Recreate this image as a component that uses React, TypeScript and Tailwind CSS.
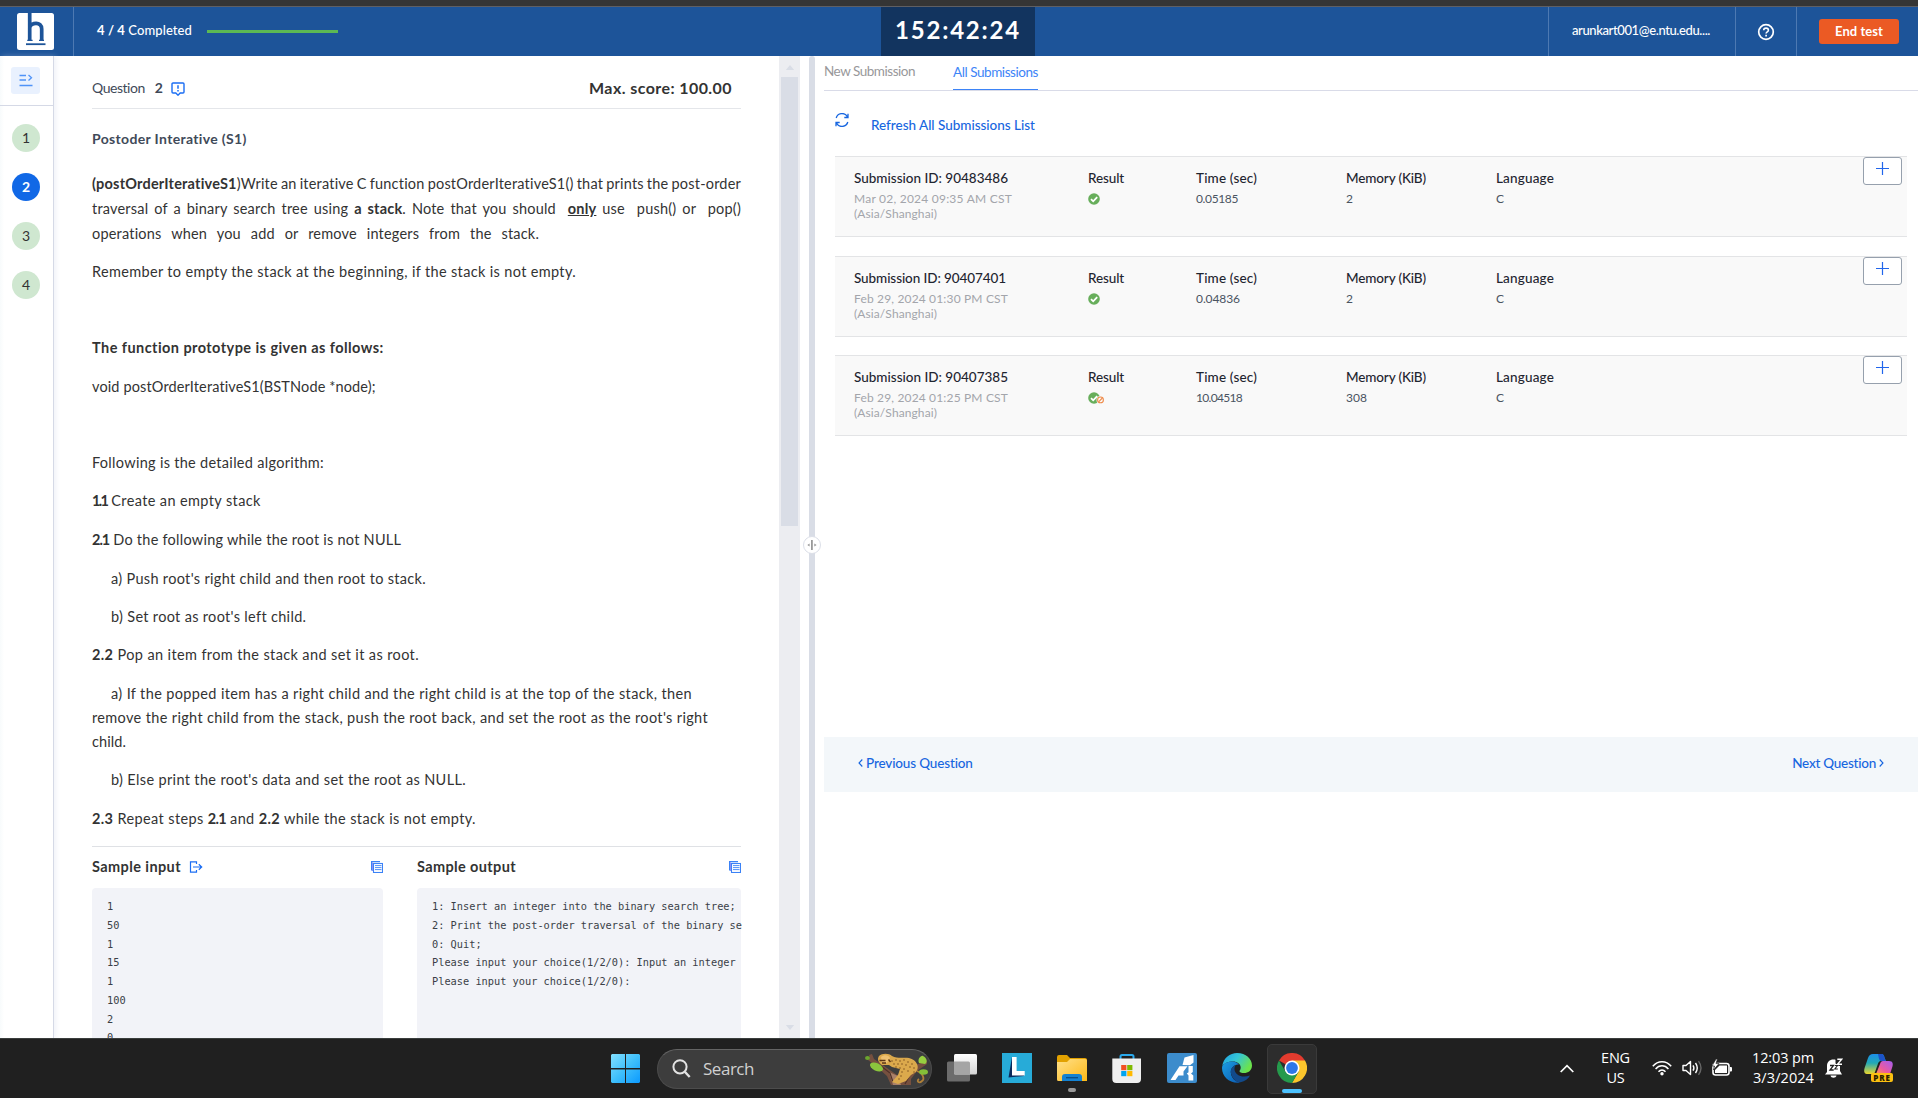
import { useLayoutEffect, useRef, type ReactNode } from "react";

type FitProps = {
  w: number;
  by?: "letter" | "word";
  className?: string;
  children: ReactNode;
};

/** One line of text whose tracking (or word gaps) is adjusted to fill a given measure. */
function Fit({ w, by = "letter", className = "", children }: FitProps) {
  const ref = useRef<HTMLSpanElement>(null);
  useLayoutEffect(() => {
    const el = ref.current;
    if (!el) return;
    el.style.letterSpacing = by === "word" ? "0.2px" : "0px";
    el.style.wordSpacing = "0px";
    const free = w - el.getBoundingClientRect().width;
    const text = el.textContent ?? "";
    if (by === "word") {
      el.style.wordSpacing = `${free / Math.max(1, text.split(/[ \u00a0]/).length - 1)}px`;
    } else {
      el.style.letterSpacing = `${free / Math.max(1, text.length)}px`;
    }
  }, [w, by]);
  return (
    <span ref={ref} className={`inline-block whitespace-pre ${className}`}>
      {children}
    </span>
  );
}

/* ---------- header ---------- */

function Logo() {
  return (
    <svg viewBox="0 0 37 37" className="h-[37px] w-[37px]">
      <rect width="37" height="37" rx="2.5" fill="#fff" />
      <path d="M12.700 0V28M12.700 14.500C14 9.200 24.700 8.200 24.700 16V28" fill="none" stroke="#1d5499" strokeWidth="3.700" />
      <path d="M10.300 27.400h5.300M22 27.400h5" fill="none" stroke="#1d5499" strokeWidth="1.200" />
      <path d="M9 31.200h19.500" stroke="#1d5499" strokeWidth="1.800" />
    </svg>
  );
}

function Header() {
  return (
    <header className="flex h-[49px] shrink-0 bg-[#1d5499] text-[13px] font-medium text-white">
      <div className="flex w-[74px] items-center border-r border-[#4d79b2] pl-[17px]">
        <Logo />
      </div>
      <div className="flex w-[807px] items-center pl-[23px]">
        <Fit w={95} className="-mt-[3px] leading-4">
          <b>4 / 4</b> Completed
        </Fit>
        <div className="ml-[15px] h-[3px] w-[131px] bg-[#5cb954]" />
      </div>
      <div className="flex w-[154px] items-center bg-[#12345f] pl-[14px] text-[24px] font-bold">
        <Fit w={126} className="-mt-[3px]">152:42:24</Fit>
      </div>
      <div className="flex-1" />
      <div className="flex w-[187px] items-center border-l border-[#4d79b2] pl-[23px]">
        <Fit w={138} className="-mt-[3px] leading-4">arunkart001@e.ntu.edu....</Fit>
      </div>
      <div className="flex w-[61px] items-center justify-center border-l border-[#4d79b2]">
        <svg viewBox="0 0 18 18" className="h-[18px] w-[18px]" fill="none" stroke="#fff">
          <circle cx="9" cy="9" r="7.300" strokeWidth="1.700" />
          <path d="M6.700 7.300c0-3 4.700-2.900 4.700-.1 0 1.700-2.300 1.700-2.300 3.400" strokeWidth="1.600" />
          <path d="M9.100 11.700v1.700" strokeWidth="1.700" />
        </svg>
      </div>
      <div className="flex w-[122px] items-center border-l border-[#4d79b2] pl-[22px]">
        <button className="flex h-[25px] w-20 items-center justify-center rounded-[3px] bg-[#eb5a24] font-bold">
          <Fit w={48} className="-mt-0.5 leading-4">End test</Fit>
        </button>
      </div>
    </header>
  );
}

/* ---------- question rail ---------- */

function Rail() {
  return (
    <aside className="w-[54px] shrink-0 border-r border-[#d5d9e6] bg-linear-to-r from-[#f8fbfc] to-white to-8% shadow-[2px_0_5px_rgba(210,218,235,0.35)]">
      <div className="flex h-[50px] border-b border-[#d5d9e6] pt-[11px] pl-[11px]">
        <div className="flex h-[27px] w-[29px] items-center justify-center rounded-[3px] bg-[#e9f1fe]">
          <svg viewBox="0 0 14 13" className="h-[13px] w-3.5" fill="none" stroke="#4f93f8" strokeWidth="1.300">
            <path d="M.5 1.500H7M.5 6H7M.5 11.500H13.500M9.500 1L12.500 3.800L9.500 6.600" />
          </svg>
        </div>
      </div>
      <div className="flex flex-col items-center gap-[21px] pt-[18px] pr-px text-sm text-[#333]">
        {[1, 2, 3, 4].map((n) => (
          <div
            key={n}
            className={
              n === 2
                ? "flex h-7 w-7 items-center justify-center rounded-full bg-[#1168e6] pb-px font-bold text-white"
                : "flex h-7 w-7 items-center justify-center rounded-full bg-[#cfe7d0] pb-px"
            }
          >
            {n}
          </div>
        ))}
      </div>
    </aside>
  );
}

/* ---------- question text ---------- */

function CopyIcon() {
  return (
    <svg viewBox="0 0 12 12" className="h-3 w-3" fill="none" stroke="#3b82f6">
      <path d="M.6 9.500V.6H9" strokeWidth="1.200" />
      <path d="M1.500 10V1.500" stroke="#8f8ff5" strokeWidth="1" />
      <rect x="2.500" y="2.500" width="9" height="9" strokeWidth="1.100" />
      <path d="M4 4.600h6.500M4 6.600h6.500M4 8.600h6.500" strokeWidth=".9" />
    </svg>
  );
}

function Line({ children, className = "" }: { children: ReactNode; className?: string }) {
  return <p className={`flex h-6 leading-6 ${className}`}>{children}</p>;
}

function Code({ lines }: { lines: string[] }) {
  return (
    <pre className="font-['DejaVu_Sans_Mono',monospace] text-[10.3px] leading-[18.75px] text-[#3a3f47]">
      {lines.join("\n")}
    </pre>
  );
}

function Question() {
  return (
    <section className="flex w-[649px] shrink-0 flex-col text-[14.500px] text-[#333]">
      <div className="flex h-[53px] items-center justify-between border-b border-[#e4e6ea] pt-2.5">
        <div className="flex items-center pt-px text-sm text-[#3f4a59]">
          <Fit w={53} className="leading-5">Question</Fit>
          <b className="ml-2.5 leading-5">2</b>
          <svg viewBox="0 0 14 14" className="mt-0.5 ml-2 h-3.5 w-3.5" fill="none" stroke="#1b6ef3">
            <path d="M2 1h10a1 1 0 0 1 1 1v8a1 1 0 0 1-1 1H9.200L7 13.200L4.800 11H2a1 1 0 0 1-1-1V2a1 1 0 0 1 1-1Z" strokeWidth="1.400" />
            <path d="M7 3.200v3.600M7 8v1.500" strokeWidth="1.500" />
          </svg>
        </div>
        <div className="mr-[9px] pt-px text-[16px] leading-5 font-bold">
          <Fit w={143}>Max. score: 100.00</Fit>
        </div>
      </div>

      <Line className="mt-[18px] text-sm font-bold text-[#3f4a59]">
        <Fit w={155}>Postoder Interative (S1)</Fit>
      </Line>

      <div className="mt-[20px] flex flex-col items-start leading-[25px]">
        <Fit w={649} by="word">
          <b>(postOrderIterativeS1</b>)Write an iterative C function postOrderIterativeS1() that prints the post-order
        </Fit>
        <Fit w={649} by="word">
          traversal of a binary search tree using <b>a stack</b>. Note that you should{"  "}
          <b className="underline">only</b> use{"  "}push() or{"  "}pop()
        </Fit>
        <Fit w={447} by="word">operations when you add or remove integers from the stack.</Fit>
      </div>

      <Line className="mt-3.5">
        <Fit w={484}>Remember to empty the stack at the beginning, if the stack is not empty.</Fit>
      </Line>
      <Line className="mt-[52px] font-bold">
        <Fit w={292}>The function prototype is given as follows:</Fit>
      </Line>
      <Line className="mt-[15px]">
        <Fit w={284}>void postOrderIterativeS1(BSTNode *node);</Fit>
      </Line>
      <Line className="mt-[52px]">
        <Fit w={232}>Following is the detailed algorithm:</Fit>
      </Line>
      <Line className="mt-3.5">
        <Fit w={170}>
          <b className="tracking-[-1.700px]">1.1</b> Create an empty stack
        </Fit>
      </Line>
      <Line className="mt-[15px]">
        <Fit w={310}>
          <b className="tracking-[-1px]">2.1</b> Do the following while the root is not NULL
        </Fit>
      </Line>
      <Line className="mt-[15px] pl-[19px]">
        <Fit w={315}>a) Push root's right child and then root to stack.</Fit>
      </Line>
      <Line className="mt-3.5 pl-[19px]">
        <Fit w={195}>b) Set root as root's left child.</Fit>
      </Line>
      <Line className="mt-3.5">
        <Fit w={327}>
          <b>2.2</b> Pop an item from the stack and set it as root.
        </Fit>
      </Line>
      <Line className="mt-[15px] pl-[19px]">
        <Fit w={581}>a) If the popped item has a right child and the right child is at the top of the stack, then</Fit>
      </Line>
      <Line>
        <Fit w={616}>remove the right child from the stack, push the root back, and set the root as the root's right</Fit>
      </Line>
      <Line>
        <Fit w={34}>child.</Fit>
      </Line>
      <Line className="mt-3.5 pl-[19px]">
        <Fit w={355}>b) Else print the root's data and set the root as NULL.</Fit>
      </Line>
      <Line className="mt-[15px]">
        <Fit w={385}>
          <b>2.3</b> Repeat steps <b className="tracking-[-0.700px]">2.1</b> and <b>2.2</b> while the stack is not empty.
        </Fit>
      </Line>

      <div className="mt-[15px] flex min-h-0 flex-1 gap-[34px] border-t border-[#dfe1e5]">
        <div className="flex w-[291px] flex-col">
          <div className="flex h-[41px] shrink-0 items-center pb-px font-bold">
            <Fit w={89}>Sample input</Fit>
            <svg viewBox="0 0 14 12" className="ml-2 h-3 w-3.5" fill="none" stroke="#1b6ef3" strokeWidth="1.200">
              <path d="M7.500 3V.8H1.500v10.400h6V9M4 6h8.500M9.800 3.200L12.700 6L9.800 8.800" />
            </svg>
            <div className="ml-auto">
              <CopyIcon />
            </div>
          </div>
          <div className="flex-1 rounded-t bg-[#f2f3f8] px-[15px] pt-[9px]">
            <Code lines={["1", "50", "1", "15", "1", "100", "2", "0"]} />
          </div>
        </div>
        <div className="flex min-w-0 flex-1 flex-col">
          <div className="flex h-[41px] shrink-0 items-center justify-between pb-px font-bold">
            <Fit w={99}>Sample output</Fit>
            <CopyIcon />
          </div>
          <div className="flex-1 rounded-t bg-[#f2f3f8] pt-[9px] pl-[15px]">
            <Code
              lines={[
                "1: Insert an integer into the binary search tree;",
                "2: Print the post-order traversal of the binary se",
                "0: Quit;",
                "Please input your choice(1/2/0): Input an integer",
                "Please input your choice(1/2/0):",
              ]}
            />
          </div>
        </div>
      </div>
    </section>
  );
}

function ScrollBar() {
  return (
    <div className="ml-[38px] flex w-[21px] shrink-0 flex-col items-center bg-[#ecedf1]">
      <svg viewBox="0 0 10 6" className="mt-[9px] h-[5px] w-2.5">
        <path d="M0 6L5 0L10 6Z" fill="#d9dde6" />
      </svg>
      <div className="mt-[7px] h-[449px] w-[17px] bg-[#d9dde6]" />
      <svg viewBox="0 0 10 6" className="mt-auto mb-2 h-[5px] w-2.5">
        <path d="M0 0L5 6L10 0Z" fill="#d9dde6" />
      </svg>
    </div>
  );
}

function Splitter() {
  return (
    <div className="relative ml-[9px] w-1.5 shrink-0 rounded-t-sm bg-[#d9dde6]">
      <div className="absolute top-[480px] -left-1.5 flex h-[18px] w-[18px] items-center justify-center rounded-full border border-[#dcdfe8] bg-white">
        <svg viewBox="0 0 10 10" className="h-2.5 w-2.5" fill="#999">
          <rect x="4" width="1.800" height="10" />
          <path d="M.3 5L2.600 3.600V6.400ZM9.600 5L7.300 3.600V6.400Z" />
        </svg>
      </div>
    </div>
  );
}

/* ---------- submissions ---------- */

type Submission = {
  id: string;
  idW: number;
  date: string;
  dateW: number;
  partial?: boolean;
  time: string;
  timeW: number;
  memory: string;
};

const submissions: Submission[] = [
  { id: "90483486", idW: 154, date: "Mar 02, 2024 09:35 AM CST", dateW: 158, time: "0.05185", timeW: 42, memory: "2" },
  { id: "90407401", idW: 152, date: "Feb 29, 2024 01:30 PM CST", dateW: 154, time: "0.04836", timeW: 44, memory: "2" },
  { id: "90407385", idW: 154, date: "Feb 29, 2024 01:25 PM CST", dateW: 154, partial: true, time: "10.04518", timeW: 46, memory: "308" },
];

function ResultIcon({ partial }: { partial?: boolean }) {
  return (
    <svg viewBox="0 0 17 12" className="mt-[3px] h-3 w-[17px]" fill="none">
      <circle cx="6" cy="6" r="5.800" fill="#67ae5b" />
      <path d="M3 6.100L5.200 8.300L9.200 4.100" stroke="#fff" strokeWidth="1.800" />
      {partial && (
        <>
          <circle cx="12.500" cy="7.900" r="4" fill="#f9f9f9" />
          <circle cx="12.500" cy="7.900" r="2.900" stroke="#ef8b4a" strokeWidth="1.100" />
          <path d="M10.600 9.800L14.400 6" stroke="#ef8b4a" strokeWidth="1.100" />
        </>
      )}
    </svg>
  );
}

function Cell({ label, w, className, children }: { label: string; w: number; className: string; children: ReactNode }) {
  return (
    <div className={`pt-[13px] ${className}`}>
      <div className="h-5 text-[13.500px] leading-[17px] font-medium text-[#1f2530]">
        <Fit w={w}>{label}</Fit>
      </div>
      {children}
    </div>
  );
}

function Card({ s }: { s: Submission }) {
  return (
    <div className="flex h-[81px] border-y border-[#e3e4e6] bg-[#f9f9f9] pl-[19px] text-[12px] leading-[15px] text-[#4a5462]">
      <Cell label={`Submission ID: ${s.id}`} w={s.idW} className="w-[234px]">
        <div className="flex flex-col items-start pt-px text-[#a3a5ab]">
          <Fit w={s.dateW}>{s.date}</Fit>
          <Fit w={83}>(Asia/Shanghai)</Fit>
        </div>
      </Cell>
      <Cell label="Result" w={36} className="w-[108px]">
        <ResultIcon partial={s.partial} />
      </Cell>
      <Cell label="Time (sec)" w={61} className="w-[150px]">
        <div className="pt-px">
          <Fit w={s.timeW}>{s.time}</Fit>
        </div>
      </Cell>
      <Cell label="Memory (KiB)" w={80} className="w-[150px]">
        <div className="pt-px">{s.memory}</div>
      </Cell>
      <Cell label="Language" w={58} className="flex-1">
        <div className="pt-px">C</div>
      </Cell>
      <button className="mr-[5px] flex h-7 w-[39px] justify-center rounded-[3px] border border-[#96a0ad] bg-white pt-1">
        <svg viewBox="0 0 14 14" className="h-3.5 w-3.5" stroke="#2166ec" strokeWidth="1.200">
          <path d="M6.500 0v13M0 6.500h13" />
        </svg>
      </button>
    </div>
  );
}

function Submissions() {
  return (
    <section className="ml-[9px] flex min-w-0 flex-1 flex-col text-[13.500px]">
      <div className="flex h-[35px] gap-[38px] border-b border-[#d9dbe8] leading-5">
        <div className="pt-[5px] text-[#98989a]">
          <Fit w={91}>New Submission</Fit>
        </div>
        <div className="h-[34px] border-b border-[#3d84f7] pt-[6px] text-[#3d84f7]">
          <Fit w={85}>All Submissions</Fit>
        </div>
      </div>
      <div className="flex h-[65px] pt-[22px] pl-[11px] font-medium text-[#1766e0]">
        <svg viewBox="0 0 14 14" className="h-3.5 w-3.5" fill="none" stroke="#1766e0" strokeWidth="1.300">
          <path d="M1.200 5A6 6 0 0 1 12.500 4.200M13 .8V4.500H9.300M12.800 9A6 6 0 0 1 1.500 9.800M1 13.200V9.500H4.700" />
        </svg>
        <Fit w={164} className="mt-0.5 ml-[22px] leading-5">Refresh All Submissions List</Fit>
      </div>
      <div className="flex flex-col gap-[18.500px] pr-[11px] pl-[11px]">
        {submissions.map((s) => (
          <Card key={s.id} s={s} />
        ))}
      </div>
      <div className="mt-auto mb-[246px] flex h-[55px] shrink-0 items-center justify-between bg-[#f3f7fa] pr-[34px] pb-[3px] pl-[34px] font-medium text-[#1766e0]">
        <div className="flex items-center gap-[3px] leading-5">
          <svg viewBox="0 0 5 8" className="h-2 w-[5px]" fill="none" stroke="#1766e0" strokeWidth="1.100">
            <path d="M4.300 .5L1 4L4.300 7.500" />
          </svg>
          <Fit w={107}>Previous Question</Fit>
        </div>
        <div className="flex items-center gap-[3px] leading-5">
          <Fit w={84}>Next Question</Fit>
          <svg viewBox="0 0 5 8" className="h-2 w-[5px]" fill="none" stroke="#1766e0" strokeWidth="1.100">
            <path d="M.7 .5L4 4L.7 7.500" />
          </svg>
        </div>
      </div>
    </section>
  );
}

/* ---------- taskbar ---------- */

function LeopardArt() {
  const spots = [
    [27, 8], [31, 7], [35, 8], [39, 7], [43, 9], [47, 11], [29, 11], [33, 11], [37, 11], [41, 12],
    [45, 14], [49, 15], [35, 15], [39, 16], [37, 19], [36, 23], [43, 18], [34, 26], [49, 19], [31, 14],
  ];
  return (
    <svg viewBox="0 0 64 32" className="h-8 w-16">
      <path d="M4 2L7 1L9 6L22 15L32 22L40 20L50 12L62 8V11L52 18L46 26V32H26L22 23L12 14L3 7L5 5Z" fill="#76503f" />
      <path d="M24 19L33 23L36 32H28Z" fill="#a98069" />
      <path d="M16 13l9 7 3 9M47 18l-7 13" stroke="#4c2f28" strokeWidth="1.200" fill="none" />
      <path d="M14 3C17 0 24 0 27 3C33 6 39 4 44 5C52 7 55 14 51 19L46 22L41 28L33 31L27 29L33 22L35 16L27 14L24 12H17C13 9 12 6 14 3Z" fill="#dba94c" />
      <path d="M16 4C19 1 24 2 25 5L22 10H17Z" fill="#eec171" />
      <path d="M14.500 7.500h6M17 10h4M23.500 6.500l2 2.500" stroke="#5b3516" strokeWidth="1.300" />
      <path d="M52 18C58 20 60 26 57 28C54 31 51 28 54 26" fill="none" stroke="#b08038" strokeWidth="1.800" />
      {spots.map(([x, y]) => (
        <circle key={`${x}-${y}`} cx={x} cy={y} r=".7" fill="#70451c" />
      ))}
      <ellipse cx="11.500" cy="14" rx="7" ry="3.800" transform="rotate(25 11.500 14)" fill="#8bc53d" />
      <path d="M54 10C52 5 57 2 58 3C62 5 63 9 60 11Z" fill="#97cf40" />
      <ellipse cx="58.500" cy="19" rx="4.500" ry="2.800" fill="#84bf38" />
      <ellipse cx="2.500" cy="5" rx="2.500" ry="2" fill="#6ca52e" />
    </svg>
  );
}

function StartIcon() {
  return (
    <svg viewBox="0 0 29 29" className="h-[29px] w-[29px]">
      <defs>
        <linearGradient id="win" x1="0" y1="0" x2="1" y2="1">
          <stop offset="0" stopColor="#83e0ff" />
          <stop offset=".5" stopColor="#40c0fb" />
          <stop offset="1" stopColor="#0b9aff" />
        </linearGradient>
      </defs>
      <path d="M1 0h13v14H0V1zM15 0h13l1 1v13H15zM0 15.500h14V29H1l-1-1zM15 15.500h14V28l-1 1H15z" fill="url(#win)" />
    </svg>
  );
}

function TaskViewIcon() {
  return (
    <svg viewBox="0 0 30 30" className="h-[30px] w-[30px]">
      <defs>
        <linearGradient id="tv" x1="0" y1="0" x2="0" y2="1">
          <stop offset="0" stopColor="#fff" />
          <stop offset="1" stopColor="#d5d5d5" />
        </linearGradient>
      </defs>
      <rect y="8.500" width="23" height="20" rx="1.500" fill="#6c6c6c" />
      <rect x="7" y="1" width="23" height="20.500" rx="1.500" fill="url(#tv)" />
      <path d="M7 8.500h14.500a1.500 1.500 0 0 1 1.500 1.500v11.500H8.500A1.500 1.500 0 0 1 7 20Z" fill="#a5a5a5" />
    </svg>
  );
}

function LIcon() {
  return (
    <svg viewBox="0 0 30 30" className="h-[30px] w-[30px]">
      <rect width="30" height="30" fill="#27abd8" />
      <path d="M10 4L6.500 24.500L22 23V18L12 20Z" fill="#0b2a5c" />
      <path d="M12.300 4V20.300H22.700" fill="none" stroke="#fff" strokeWidth="4.600" />
    </svg>
  );
}

function FolderIcon() {
  return (
    <svg viewBox="0 0 30 30" className="h-[30px] w-[30px]">
      <defs>
        <linearGradient id="fold" x1="0" y1="0" x2="1" y2="1">
          <stop offset="0" stopColor="#ffe08a" />
          <stop offset="1" stopColor="#fdb917" />
        </linearGradient>
      </defs>
      <path d="M0 4a2 2 0 0 1 2-2h8l3 3h15a2 2 0 0 1 2 2v5H0Z" fill="#e2a100" />
      <path d="M0 9h10l3-3h15.500A1.500 1.500 0 0 1 30 7.500V28H1.500A1.500 1.500 0 0 1 0 26.500Z" fill="url(#fold)" />
      <path d="M5 28v-4a3 3 0 0 1 3-3h14a3 3 0 0 1 3 3v4Z" fill="#1382d3" />
      <path d="M9 24.700h12" stroke="#064c88" strokeWidth="1.300" />
    </svg>
  );
}

function StoreIcon() {
  return (
    <svg viewBox="0 0 30 30" className="h-[30px] w-[30px]">
      <path d="M8.500 7V3.500a1.500 1.500 0 0 1 1.500-1.500h10a1.500 1.500 0 0 1 1.500 1.500V7" fill="none" stroke="#2aa9ec" strokeWidth="2" />
      <path d="M.3 5.500h28.700V26a4 4 0 0 1-4 4H4.300a4 4 0 0 1-4-4Z" fill="#efefef" />
      <rect x="9.200" y="12" width="5.200" height="5.200" fill="#f25022" />
      <rect x="15.200" y="12" width="5.200" height="5.200" fill="#7fba00" />
      <rect x="9.200" y="18" width="5.200" height="5.200" fill="#00a4ef" />
      <rect x="15.200" y="18" width="5.200" height="5.200" fill="#ffb900" />
    </svg>
  );
}

function StrideIcon() {
  return (
    <svg viewBox="0 0 30 30" className="h-[30px] w-[30px]">
      <rect width="30" height="30" rx="2" fill="#3c8ccc" />
      <path d="M17.500 4.500L26.500 2V9.500L23 12.300L15.500 12Z" fill="#fff" />
      <path d="M12.500 13.200H20.500L16.500 18.500V22.500H11.500L8.500 27H3.500Z" fill="#fff" />
      <path d="M21.500 13H25.800V19L24 20.500L26.300 22.500V27.500H21.500V22.500L19.800 20.500L21.500 19.200Z" fill="#fff" />
    </svg>
  );
}

function EdgeIcon() {
  return (
    <svg viewBox="0 0 30 30" className="h-[30px] w-[30px]">
      <defs>
        <linearGradient id="e1" x1="0" y1="0" x2="1" y2=".5">
          <stop offset="0" stopColor="#1c9fe4" />
          <stop offset=".5" stopColor="#35c6d6" />
          <stop offset="1" stopColor="#6be34c" />
        </linearGradient>
        <linearGradient id="e2" x1="0" y1="0" x2="1" y2="1">
          <stop offset="0" stopColor="#1b9de2" />
          <stop offset="1" stopColor="#0c5db4" />
        </linearGradient>
      </defs>
      <path d="M.2 13C1.500 5 8 0 15 0C24 0 30 6 30 12.500C30 17.500 26 20 22 20C19.500 20 17.500 19.300 17.500 18.200C17.500 17.300 18.700 17 18.700 14.500C18.700 11 15 8.500 11 8.500C6 8.500 2 10.500 .2 13Z" fill="url(#e1)" />
      <path d="M0 15C0 11 5 8.500 10.500 8.500C13 8.500 16 10 17 11.500C12 11 8.500 15.500 8.800 19.500C9.300 25 13 28.500 18 29.600C8 31 0 24 0 15Z" fill="url(#e2)" />
      <path d="M13.500 12C9.500 14 8.300 17 9 20.500C10.300 26 15 29.800 18.500 29.300C23 28.300 26.500 25.500 28 22.500C20 25.500 13 22 12.500 16.500C12.400 14.500 13 13 13.500 12Z" fill="#124a8a" />
    </svg>
  );
}

function ChromeIcon() {
  return (
    <svg viewBox="0 0 30 30" className="h-[30px] w-[30px]">
      <path d="M15 15L2 7.500A15 15 0 0 1 28 7.500Z" fill="#e33b2e" />
      <path d="M15 7.500H28A15 15 0 0 1 15 30L21.500 18.700Z" fill="#fcc62c" />
      <path d="M2 7.500A15 15 0 0 0 15 30L21.500 18.700L15 15L8.500 18.700Z" fill="#259a4c" />
      <circle cx="15" cy="15" r="7.500" fill="#fff" />
      <circle cx="15" cy="15" r="5.900" fill="#2d77e8" />
    </svg>
  );
}

function CopilotIcon() {
  return (
    <div className="relative h-[29px] w-[30px]">
      <svg viewBox="0 0 30 29" className="h-[29px] w-[30px]">
        <defs>
          <linearGradient id="c1" x1="0" y1="0" x2="0" y2="1">
            <stop offset="0" stopColor="#1c8fea" />
            <stop offset=".45" stopColor="#22a9b5" />
            <stop offset="1" stopColor="#ecd72c" />
          </linearGradient>
          <linearGradient id="c2" x1="1" y1="0" x2="0" y2="1">
            <stop offset="0" stopColor="#a35cf0" />
            <stop offset=".6" stopColor="#ea5aa0" />
            <stop offset="1" stopColor="#ff9a4d" />
          </linearGradient>
        </defs>
        <path d="M9 0H17C20 0 20 2 21 5L22 7H17C15 7 14.500 8 13.500 11L11 18C10.500 19.500 9.500 20 8 20H3C0 20-.3 17 .6 14L4 4C5 1.500 6.500 0 9 0Z" fill="url(#c1)" />
        <path d="M14 0H17C20 0 20 2 21 5L22 7H17C15.500 7 15 5 14 0Z" fill="#1c53c8" />
        <path d="M19 7H25C29 7 29.300 10 28.300 13L26 20H12L16 10C16.600 8 17.500 7 19 7Z" fill="url(#c2)" />
      </svg>
      <div className="absolute top-[19px] left-[7px] flex h-[9px] w-[22px] items-center justify-center rounded-[2px] bg-[#fcc011] font-['Open_Sans',sans-serif] text-[8px] leading-[9px] font-extrabold tracking-[0.8px] text-[#2a2100]">
        PRE
      </div>
    </div>
  );
}

function Taskbar() {
  return (
    <footer className="flex h-[60px] shrink-0 items-center border-t border-[#3a3e3d] bg-[#202020] font-['Open_Sans','Noto_Sans',sans-serif] text-white">
      <div className="ml-[611px]">
        <StartIcon />
      </div>
      <div className="ml-[17px] flex h-10 w-[275px] items-center rounded-full border border-[#4c4c4c] border-t-[#646464] bg-[#3d3d3d] pl-3.5">
        <svg viewBox="0 0 19 19" className="h-[19px] w-[19px]" fill="none" stroke="#e3e3e3" strokeWidth="2">
          <circle cx="8" cy="7.800" r="6.600" />
          <path d="M12.800 12.800L17.700 18" strokeWidth="2.400" />
        </svg>
        <Fit w={51} className="ml-3 text-[17px] leading-6 text-[#d0d0d0]">Search</Fit>
        <div className="mr-0.5 ml-auto">
          <LeopardArt />
        </div>
      </div>
      <div className="ml-[15px] flex h-[50px] items-center gap-[25px] pb-px">
        <TaskViewIcon />
        <LIcon />
        <div className="relative">
          <FolderIcon />
          <div className="absolute top-[35px] left-[11px] h-1 w-2 rounded-full bg-[#9a9a9a]" />
        </div>
        <StoreIcon />
        <StrideIcon />
        <EdgeIcon />
      </div>
      <div className="relative ml-[15px] flex h-[50px] w-[50px] items-center justify-center rounded-[5px] border border-[#3a3a3a] bg-[#2d2d2d] pb-px">
        <ChromeIcon />
        <div className="absolute bottom-0 left-3.5 h-1 w-5 rounded-full bg-[#4cc2ff]" />
      </div>

      <svg viewBox="0 0 14 9" className="ml-auto h-[9px] w-3.5" fill="none" stroke="#fff" strokeWidth="1.700">
        <path d="M.7 8L7 1.700L13.300 8" />
      </svg>
      <div className="ml-[27px] flex flex-col items-center pb-0.5 text-[14.500px] leading-5">
        <Fit w={29}>ENG</Fit>
        <Fit w={18}>US</Fit>
      </div>
      <div className="ml-[22px] flex items-center gap-2.5 pb-0.5">
        <svg viewBox="0 0 20 16" className="h-4 w-5" fill="none" stroke="#fff" strokeWidth="1.500">
          <path d="M.8 6.200C5.800 .2 14.200 .2 19.200 6.200M3.600 9C7.200 4.700 12.800 4.700 16.400 9M6.500 11.700C8.500 9.300 11.500 9.300 13.500 11.700" />
          <circle cx="10" cy="13.700" r="1.700" fill="#fff" stroke="none" />
        </svg>
        <svg viewBox="0 0 20 16" className="h-4 w-5" fill="none" stroke="#fff" strokeWidth="1.400">
          <path d="M1 5.500H4L8.500 1.500V14.500L4 10.500H1Z" strokeLinejoin="round" />
          <path d="M11 5.300Q12.800 8 11 10.700M13.500 3Q17 8 13.500 13" />
          <path d="M16.500 1.200Q21.500 8 16.500 14.800" stroke="#666" />
        </svg>
        <svg viewBox="0 0 20 18" className="h-[18px] w-5">
          <rect x="1" y="4.500" width="16" height="11.500" rx="2.500" fill="none" stroke="#fff" strokeWidth="1.600" />
          <path d="M3 14V11L7.500 6.500H15V14Z" fill="#fff" />
          <path d="M18 8h1a1 1 0 0 1 1 1v2.500a1 1 0 0 1-1 1h-1Z" fill="#fff" />
          <path d="M4 0L0 7H2.500L1.500 11L7 4.500H4L5.500 0Z" fill="#fff" stroke="#202020" strokeWidth=".7" />
        </svg>
      </div>
      <div className="ml-5 flex w-[62px] flex-col items-end pb-0.5 text-[14.500px] leading-5">
        <Fit w={62}>12:03 pm</Fit>
        <Fit w={61}>3/3/2024</Fit>
      </div>
      <svg viewBox="0 0 18 20" className="mb-0.5 ml-[11px] h-5 w-[18px]" fill="none">
        <path d="M2 14V8C2 4 4.500 1.500 8.500 1.500S15 4 15 8V13L17 16.500H0Z" fill="#fff" />
        <path d="M5.500 17.500C6 20.500 11 20.500 11.500 17.500Z" fill="#fff" />
        <path d="M5 7.500H8.500L5 12H8.700" stroke="#202020" strokeWidth="1.300" />
        <path d="M10.500 5.500V1H18V8H14" fill="#202020" />
        <path d="M9.800 7.500H12.500L9.800 11H12.800" stroke="#202020" strokeWidth="1.100" />
        <path d="M12.300 1.300H16.700L12.500 6.300H17" stroke="#fff" strokeWidth="1.400" />
      </svg>
      <div className="mr-6 ml-[21px]">
        <CopilotIcon />
      </div>
    </footer>
  );
}

export default function App() {
  return (
    <div className="flex h-[1098px] w-[1918px] flex-col overflow-hidden bg-white font-['Lato',sans-serif]">
      <div className="h-[7px] shrink-0 border-b border-[#5f5f63] bg-[#353535]" />
      <Header />
      <main className="flex min-h-0 flex-1">
        <Rail />
        <div className="flex min-h-0 pl-[38px]">
          <Question />
          <ScrollBar />
          <Splitter />
        </div>
        <Submissions />
      </main>
      <Taskbar />
    </div>
  );
}
